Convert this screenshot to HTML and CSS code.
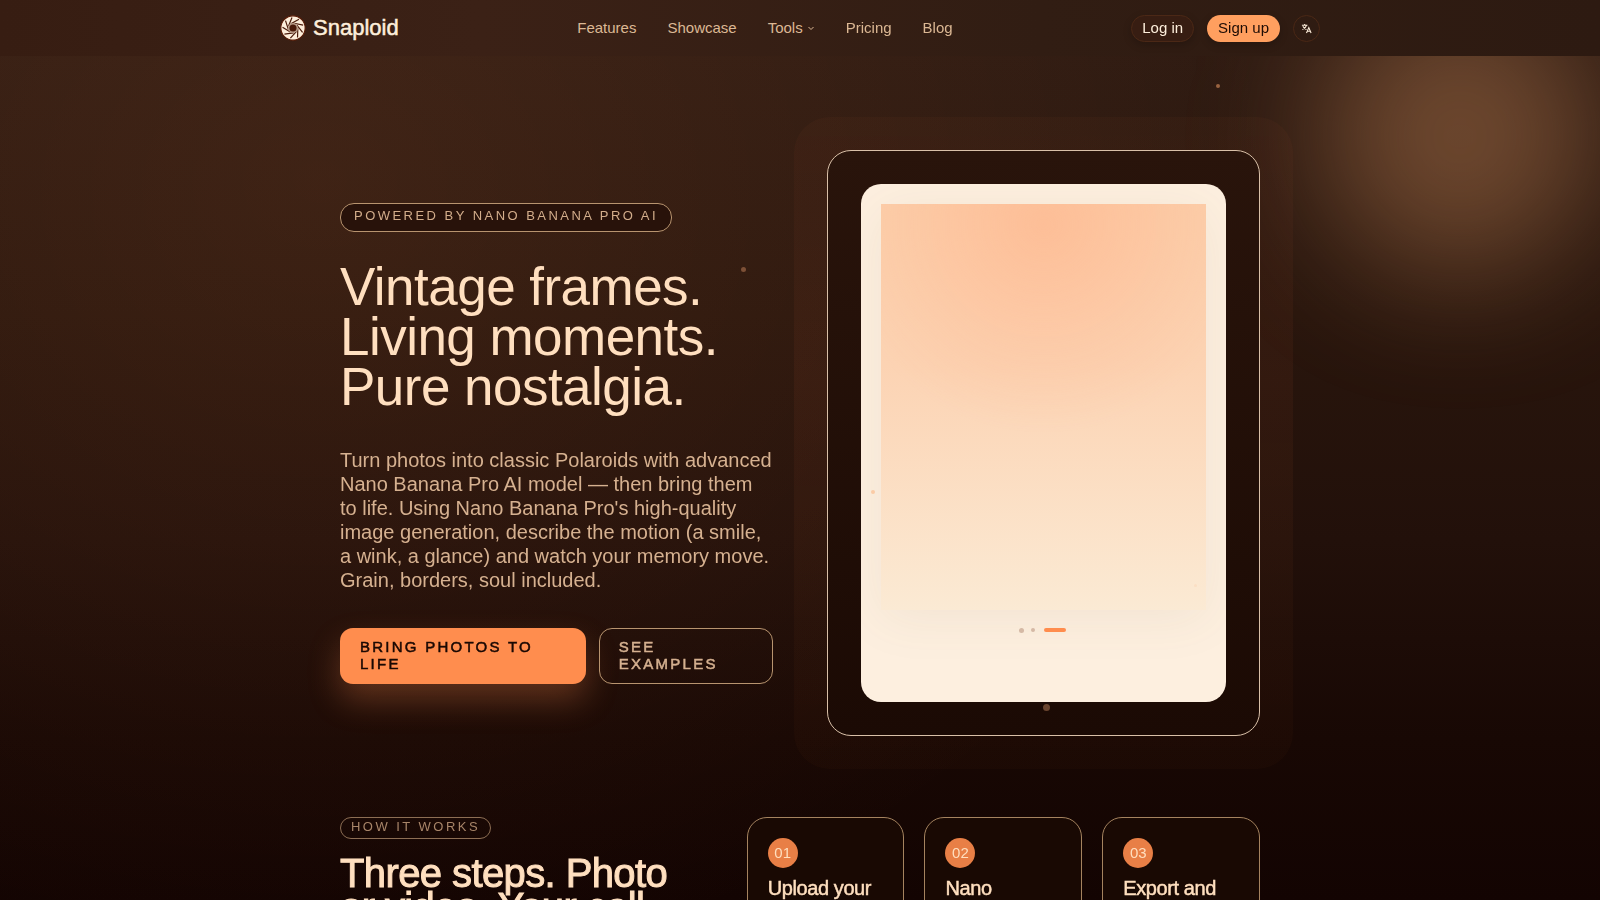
FILE: index.html
```html
<!DOCTYPE html>
<html lang="en">
<head>
    <meta charset="UTF-8">
    <meta name="viewport" content="width=device-width, initial-scale=1.0">
    <title>Snaploid</title>
    <link rel="stylesheet" href="styles.css">
</head>
<body>
    <div class="backdrop">
        <div class="glow"></div>
    </div>

    <header class="site-header">
        <div class="header-inner">
            <a class="logo" href="#">
                <svg width="26" height="26" viewBox="0 0 24 24" aria-hidden="true">
                    <circle cx="12" cy="12" r="11.2" fill="#fdeedb" stroke="#5a1d08" stroke-width="1"/>
                    <g stroke="#4a1a0a" stroke-width="1.1" fill="none">
                        <path id="blade" d="M10 8 L17.500 4"/>
                        <use href="#blade" transform="rotate(40 12 12)"/>
                        <use href="#blade" transform="rotate(80 12 12)"/>
                        <use href="#blade" transform="rotate(120 12 12)"/>
                        <use href="#blade" transform="rotate(160 12 12)"/>
                        <use href="#blade" transform="rotate(200 12 12)"/>
                        <use href="#blade" transform="rotate(240 12 12)"/>
                        <use href="#blade" transform="rotate(280 12 12)"/>
                        <use href="#blade" transform="rotate(320 12 12)"/>
                    </g>
                    <circle cx="12" cy="12" r="4" fill="#4a1a0a" stroke="#b79a86" stroke-width="1.400"/>
                </svg>
                <span>Snaploid</span>
            </a>

            <nav class="main-nav">
                <a href="#">Features</a>
                <a href="#">Showcase</a>
                <a href="#" class="has-menu">Tools
                    <svg width="8" height="8" viewBox="0 0 8 8" fill="none" stroke="currentColor" aria-hidden="true"><path d="M1.500 4 L4 6.500 L6.500 4"/></svg>
                </a>
                <a href="#">Pricing</a>
                <a href="#">Blog</a>
            </nav>

            <div class="header-actions">
                <button type="button" class="pill login">Log in</button>
                <button type="button" class="pill signup">Sign up</button>
                <button type="button" class="lang" aria-label="Language">
                    <svg width="11" height="11" viewBox="0 0 24 24" fill="none" stroke="currentColor" stroke-width="2.400" aria-hidden="true">
                        <path d="M2 5h12M8 2v3M12 5c-1 4-4 7-9 9M4 7c2 4 5 6 8 7"/>
                        <path d="M12 22l5-12 5 12M14 18h6"/>
                    </svg>
                </button>
            </div>
        </div>
    </header>

    <main class="container">
        <section class="hero">
            <div class="hero-copy">
                <span class="badge">Powered by Nano Banana Pro AI</span>
                <h1>Vintage frames.<br>Living moments.<br>Pure nostalgia.</h1>
                <p>Turn photos into classic Polaroids with advanced Nano Banana Pro AI model — then bring them to life. Using Nano Banana Pro's high-quality image generation, describe the motion (a smile, a wink, a glance) and watch your memory move. Grain, borders, soul included.</p>
                <div class="cta-row">
                    <button type="button" class="btn btn-primary">Bring photos to life</button>
                    <button type="button" class="btn btn-outline">See examples</button>
                </div>
            </div>

            <div class="frame">
                <div class="polaroid">
                    <div class="photo"></div>
                    <div class="pager">
                        <span class="dot"></span>
                        <span class="dot small"></span>
                        <span class="dash"></span>
                    </div>
                </div>
            </div>

            <span class="particle p1"></span>
            <span class="particle p2"></span>
            <span class="particle p3"></span>
            <span class="particle p4"></span>
            <span class="particle p5"></span>
        </section>

        <section class="steps">
            <div class="steps-copy">
                <span class="badge badge-small">How it works</span>
                <h2>Three steps. Photo<br>or video. Your call.</h2>
            </div>
            <div class="step-cards">
                <article class="step">
                    <span class="step-num">01</span>
                    <h3>Upload your photo</h3>
                </article>
                <article class="step">
                    <span class="step-num">02</span>
                    <h3>Nano Banana Pro</h3>
                </article>
                <article class="step">
                    <span class="step-num">03</span>
                    <h3>Export and share</h3>
                </article>
            </div>
        </section>
    </main>
</body>
</html>
```
FILE: styles.css
```css
* {
    box-sizing: border-box;
}

body {
    margin: 0;
    min-height: 100vh;
    background-color: #130502;
    color: #ffdfbf;
    font-family: "Liberation Sans", Arial, sans-serif;
    font-size: 15px;
}

h1, h2, h3, p {
    margin: 0;
}

a {
    color: inherit;
    text-decoration: none;
}

button {
    font-family: inherit;
    cursor: pointer;
}

/* page background */
.backdrop {
    position: fixed;
    inset: 0;
    z-index: -1;
    overflow: hidden;
    background:
        radial-gradient(ellipse 60% 90% at 20% 20%, rgba(255, 138, 76, 0.09), transparent),
        linear-gradient(180deg, #301c13 0%, #29160d 35%, #22100a 60%, #180804 82%, #130402 100%);
}

.glow {
    position: absolute;
    top: -4px;
    right: 0;
    width: 280px;
    height: 280px;
    border-radius: 50%;
    background-color: rgba(235, 160, 105, 0.34);
    filter: blur(64px);
}

/* header */
.site-header {
    background: linear-gradient(90deg, #371d12 0%, #3b2116 30%, #311d13 65%, #2d1a11 100%);
}

.header-inner {
    display: flex;
    justify-content: space-between;
    align-items: center;
    max-width: 1040px;
    height: 56px;
    margin: 0 auto;
}

.logo {
    display: flex;
    align-items: center;
    gap: 7px;
    padding-bottom: 1px;
    color: #fdeedb;
    font-size: 22px;
    line-height: 24px;
    -webkit-text-stroke: 0.5px currentColor;
}

.main-nav {
    display: flex;
    gap: 31px;
    padding-bottom: 2px;
    color: #dcb894;
}

.has-menu {
    display: flex;
    align-items: center;
    gap: 4px;
}

.header-actions {
    display: flex;
    align-items: center;
    gap: 13px;
}

.pill {
    height: 27px;
    padding: 0 10px 2px;
    border: 1px solid transparent;
    border-radius: 14px;
    font-size: 15px;
    box-shadow: 0 3px 8px rgba(0, 0, 0, 0.2);
}

.login {
    background-color: #371d12;
    border-color: #4b2816;
    color: #fdeedb;
}

.signup {
    background-color: #ff9f5f;
    color: #1d0b04;
}

.lang {
    display: grid;
    place-items: center;
    width: 27px;
    height: 27px;
    padding: 0;
    border: 1px solid #4b2816;
    border-radius: 50%;
    background-color: transparent;
    color: #fdeedb;
}

/* hero */
.container {
    max-width: 920px;
    margin: 0 auto;
}

.hero {
    position: relative;
    isolation: isolate;
    display: grid;
    grid-template-columns: 1fr 1fr;
    gap: 54px;
    align-items: center;
    padding: 94px 0 81px;
}

.badge {
    display: inline-block;
    padding: 0 13px 3px;
    border: 1px solid #b8946f;
    border-radius: 14px;
    background-color: #28120a;
    color: #d3ad8b;
    font-size: 13px;
    line-height: 24px;
    letter-spacing: 0.19em;
    text-transform: uppercase;
}

.badge-small {
    padding: 0 10px 2px;
    border-color: #8d6e54;
    background-color: transparent;
    color: #a88569;
    line-height: 18px;
}

h1 {
    margin-top: 30px;
    font-size: 53px;
    font-weight: normal;
    line-height: 50px;
    letter-spacing: -0.01em;
}

.hero-copy p {
    margin-top: 36px;
    color: #d6b190;
    font-size: 20px;
    line-height: 24px;
}

.cta-row {
    display: grid;
    grid-template-columns: 24fr 17fr;
    gap: 13px;
    margin-top: 36px;
}

.btn {
    padding: 9px 19px 11px;
    border: 1px solid transparent;
    border-radius: 13px;
    font-size: 15px;
    line-height: 17px;
    letter-spacing: 0.15em;
    text-align: left;
    text-transform: uppercase;
    -webkit-text-stroke: 0.5px currentColor;
}

.btn-primary {
    background-color: #ff8d4e;
    color: #1a0803;
    box-shadow: 0 16px 32px rgba(255, 141, 78, 0.28);
}

.btn-outline {
    border-color: #b8946f;
    background-color: transparent;
    color: #d6b190;
}

.frame {
    position: relative;
    padding: 33px;
    border: 1px solid #d9c0a8;
    border-radius: 24px;
    background: linear-gradient(180deg, #29140b, #1b0a04);
}

.frame::before {
    content: "";
    position: absolute;
    inset: -34px;
    z-index: -1;
    border-radius: 36px;
    background: linear-gradient(180deg, rgba(255, 120, 70, 0.03), rgba(255, 120, 70, 0.06) 40%, rgba(255, 150, 70, 0.025));
}

.polaroid {
    padding: 20px 20px 70px;
    border-radius: 20px;
    overflow: hidden;
    background-color: #fdefdf;
}

.photo {
    aspect-ratio: 4 / 5;
    background:
        radial-gradient(circle at 50% 5%, rgba(255, 160, 115, 0.36), transparent 50%),
        linear-gradient(180deg, #fccfab 0%, #fcd3b3 40%, #fbead4 100%);
    box-shadow: 0 8px 48px rgba(110, 100, 60, 0.08);
}

.pager {
    display: flex;
    justify-content: center;
    align-items: center;
    gap: 7px;
    height: 22px;
    padding: 18px 2px 0 0;
}

.dot {
    width: 5px;
    height: 5px;
    border-radius: 50%;
    background-color: #d5b9a5;
}

.dot.small {
    width: 4px;
    height: 4px;
}

.dash {
    width: 22px;
    height: 4px;
    margin-left: 2px;
    border-radius: 2px;
    background-color: #ff8d4e;
}

/* floating dust */
.particle {
    position: absolute;
    width: 5px;
    height: 5px;
    border-radius: 50%;
    background-color: #7d5036;
}

.p1 { top: 211px; left: 401px; }
.p2 { top: 28px; left: 876px; width: 4px; height: 4px; background-color: #9a6340; }
.p3 { top: 434px; left: 531px; width: 4px; height: 4px; background-color: #fbcba6; }
.p4 { top: 528px; left: 854px; width: 3px; height: 3px; background-color: #fbdfc4; }
.p5 { top: 648px; left: 703px; width: 7px; height: 7px; background-color: #6a452f; }

/* steps */
.steps {
    display: grid;
    grid-template-columns: 5fr 7fr;
    gap: 40px;
    padding-bottom: 80px;
}

h2 {
    margin-top: 17px;
    font-size: 40px;
    font-weight: normal;
    line-height: 34px;
    letter-spacing: -0.015em;
    -webkit-text-stroke: 1px currentColor;
}

.step-cards {
    display: grid;
    grid-template-columns: repeat(3, 1fr);
    gap: 20px;
}

.step {
    padding: 20px;
    border: 1px solid #a5835f;
    border-radius: 20px;
    background-color: #190903;
}

.step-num {
    display: grid;
    place-items: center;
    width: 30px;
    height: 30px;
    padding-bottom: 2px;
    border-radius: 50%;
    background-color: #e87f46;
    color: #ffdfbf;
}

h3 {
    margin-top: 8px;
    font-size: 20px;
    font-weight: normal;
    line-height: 24px;
    letter-spacing: -0.02em;
    -webkit-text-stroke: 0.5px currentColor;
}
```
